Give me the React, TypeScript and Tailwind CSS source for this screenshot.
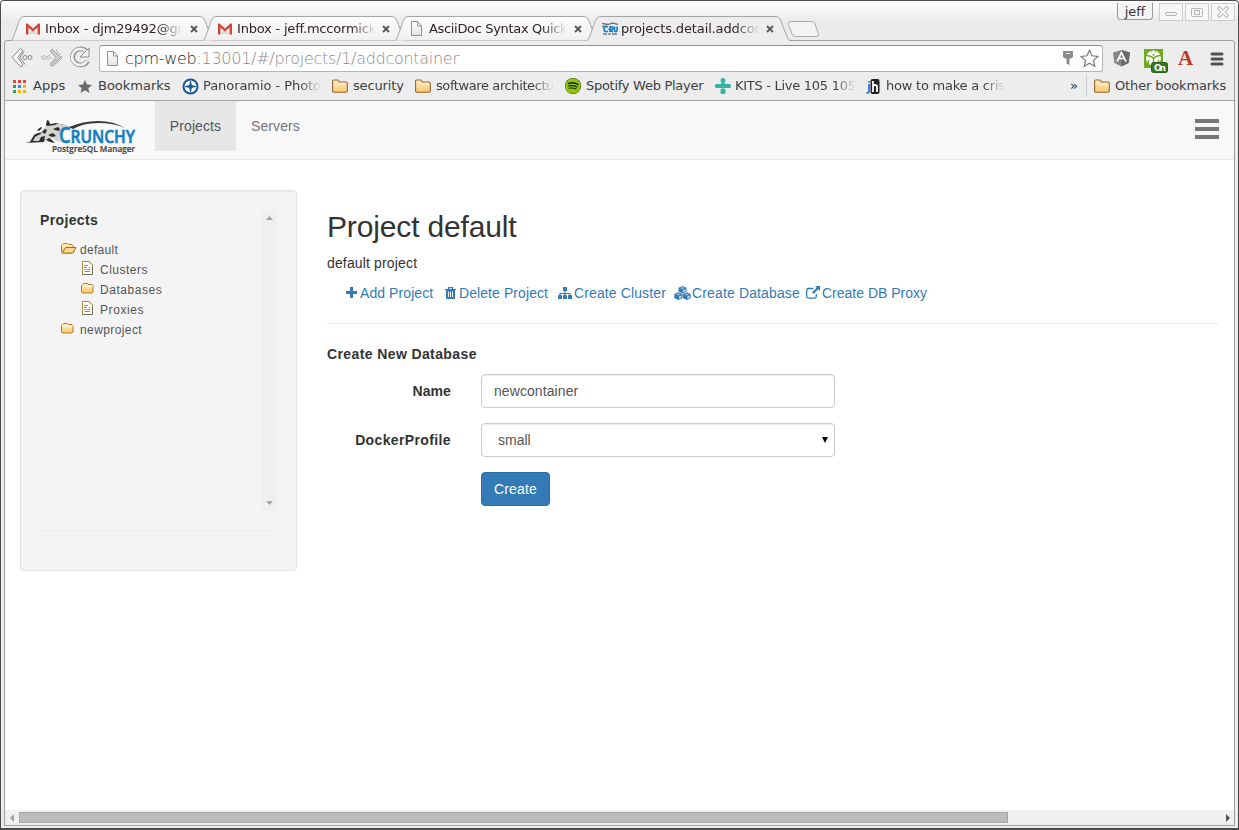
import type { ReactNode } from "react";
import { FaSpotify } from "react-icons/fa";

const ui = "font-['DejaVu_Sans',sans-serif] text-[13px] leading-[16px] whitespace-nowrap";

function GmailIcon() {
  return (
    <svg width="14" height="12" viewBox="0 0 14 12" className="block">
      <path d="M1 1h12v10H1z" fill="#eee" />
      <path d="M2.5 11 7 6l4.5 5z" fill="#d8d8d8" />
      <path d="M0 1.3Q0 .3 1.2.3L7 5.4 12.8.3Q14 .3 14 1.3V11.5H11.6V4.4L7 8.4 2.4 4.4v7.1H0z" fill="#d14336" />
    </svg>
  );
}

function PageIcon() {
  return (
    <svg width="13" height="15" viewBox="0 0 13 15" className="block">
      <defs>
        <linearGradient id="pg" x2="0" y2="1">
          <stop stopColor="#fff" />
          <stop offset="1" stopColor="#e4e4e4" />
        </linearGradient>
      </defs>
      <path d="M1.5 .5h6L11.5 5v9.500H1.500zM7.500.500V5h4" fill="url(#pg)" stroke="#909090" />
    </svg>
  );
}

function CrunchyIcon() {
  return (
    <svg width="17" height="14" viewBox="0 0 17 14" className="block">
      <path d="M0 1.500 6 2.500l5-1.500 5 1.500M0 4.500h5" stroke="#777" strokeWidth="1.400" fill="none" />
      <path d="M6 4.800Q2 3.500 2 7t4 2.200M8 10V4.800h1.500q1.500 0 1.500 1.400T9.500 7.600H8l2.800 2.400M12.500 4.500v3.700q0 1.500 1.300 1.500t1.300-1.500V4.500" stroke="#1483c9" strokeWidth="1.700" fill="none" />
      <path d="M1 12h4m1 0h3m1 0h5" stroke="#777" strokeWidth="1.500" />
    </svg>
  );
}

function Folder() {
  return (
    <svg width="16" height="14" viewBox="0 0 16 14" className="block">
      <defs>
        <linearGradient id="fo" x2="0" y2="1">
          <stop stopColor="#fff0c4" />
          <stop offset="1" stopColor="#fbc870" />
        </linearGradient>
      </defs>
      <path d="M.6 12V2.2Q.6 1 1.8 1H6L7.3 3H14Q15.3 3 15.3 4.2V12Q15.3 13.2 14 13.2H1.8Q.6 13.2.6 12z" fill="url(#fo)" stroke="#946333" strokeWidth="1.1" />
      <path d="M6 5h8" stroke="#fff3cf" />
    </svg>
  );
}

function Tab({ icon, text, tracking, active }: { icon: ReactNode; text: string; tracking: string; active?: boolean }) {
  return (
    <div className={`relative -mb-px -mr-[11px] h-[25px] w-[203px] shrink-0 ${active ? "z-10" : ""}`}>
      <svg className="absolute inset-0" width="203" height="25" viewBox="0 0 203 25">
        <defs>
          <linearGradient id="tb" x2="0" y2="1">
            <stop stopColor="#fdfdfd" />
            <stop offset="1" stopColor="#f0f0f0" />
          </linearGradient>
        </defs>
        <path d="M0 24.5 Q1.500 24 2.500 21L8.500 4.500Q9.800.500 13 .500H189Q192 .500 193.500 4L200.500 22Q201.300 24 203 24.500" fill={active ? "#ededed" : "url(#tb)"} stroke="#a5a5a5" />
        {active && <path d="M1 24.5H202" stroke="#ededed" strokeWidth="1.500" />}
      </svg>
      <div className="relative flex h-full items-center pl-[15px]">
        <span className="flex w-[19px]">{icon}</span>
        <span className={`${ui} ${tracking} text-[#2e2424] [mask-image:linear-gradient(to_right,black_82%,transparent)]`}>{text}</span>
        <svg className="absolute left-[179px] top-[9px]" width="8" height="8" viewBox="0 0 8 8">
          <path d="m1 1 6 6m0-6L1 7" stroke="#5b5b5b" strokeWidth="2" />
        </svg>
      </div>
    </div>
  );
}

function Mark({ icon, text, box, clip = "", gap = "w-[21px]" }: { icon: ReactNode; text: string; box: string; clip?: string; gap?: string }) {
  return (
    <div className={`flex shrink-0 items-center ${box}`}>
      <span className={`flex shrink-0 ${gap}`}>{icon}</span>
      <span className={`${ui} text-[#3b3f41] ${clip}`}>{text}</span>
    </div>
  );
}

const fade = "[mask-image:linear-gradient(to_right,black_82%,transparent)]";

function BrowserTop() {
  return (
    <div className="flex h-[39px] shrink-0 rounded-t-[3px] bg-gradient-to-b from-white to-[#ebebeb] to-50% pl-[10px]">
      <div className="flex w-[768px] items-end">
        <Tab icon={<GmailIcon />} text="Inbox - djm29492@gr" tracking="tracking-[-0.170px]" />
        <Tab icon={<GmailIcon />} text="Inbox - jeff.mccormick" tracking="tracking-[-0.200px]" />
        <Tab icon={<PageIcon />} text="AsciiDoc Syntax Quick" tracking="tracking-[-0.330px]" />
        <Tab icon={<CrunchyIcon />} text="projects.detail.addcor" tracking="tracking-[-0.130px]" active />
      </div>
      <svg className="ml-[8px] mt-[19px]" width="34" height="19" viewBox="0 0 34 19">
        <path d="M4 1.500H24Q27 1.500 28 4L31.500 14Q32 16.500 29 16.500H9Q6 16.500 5 14L1.500 4.500Q.500 1.500 4 1.500z" fill="#f4f4f4" stroke="#ababab" />
      </svg>
      <div className="ml-auto flex items-start pr-[3px] pt-[2px]">
        <div className={`${ui} mr-[6px] flex h-[17px] w-[36px] items-center justify-center rounded-b-[4px] border border-t-0 border-[#999] bg-[#f4f4f4] pt-px text-[#333]`}>jeff</div>
        <svg width="76" height="18" viewBox="0 0 76 18" className="block">
          <g fill="#f7f7f7" stroke="#cbcbcb">
            <rect x=".500" y=".500" width="23" height="17" />
            <rect x="26.500" y=".500" width="23" height="17" />
            <rect x="52.500" y=".500" width="23" height="17" />
            <rect x="6.500" y="9.500" width="11" height="3" rx="1.500" stroke="#b5b5b5" />
            <rect x="32.500" y="5.500" width="11" height="8" rx="1" stroke="#b5b5b5" />
            <rect x="35.500" y="7.500" width="5" height="4" stroke="#b5b5b5" />
          </g>
          <path d="m60.500 5.500 7 7m0-7-7 7" stroke="#b0b0b0" strokeWidth="3.800" strokeLinecap="square" />
          <path d="m60.500 5.500 7 7m0-7-7 7" stroke="#fff" strokeWidth="2" strokeLinecap="square" />
        </svg>
      </div>
    </div>
  );
}

function Toolbar() {
  return (
    <div className="flex h-[31px] shrink-0 items-center pl-[6px] pt-[3px]">
      <svg width="82" height="24" viewBox="0 0 82 24" className="block">
        <g fill="none" stroke="#898989" strokeWidth="1">
          <path d="M9.500 2.500 1 11.500l9 9.500 2-2-5-7.500 5-7z" fill="#f8f8f8" />
          <path d="m13 5.500-4 6 5 7" />
          <circle cx="14" cy="11.500" r="2" />
          <circle cx="19" cy="11.500" r="2" />
          <g stroke="#888">
            <circle cx="32.500" cy="11.500" r="1.800" strokeDasharray="1.500 1" />
            <circle cx="37.500" cy="11.500" r="1.800" strokeDasharray="1.500 1" />
            <path d="m41 3 8.500 8.500L41 20.500l-2-2 6-7-6-6.500z" fill="#ccc" strokeDasharray="2 .800" />
            <path d="m45 4 6 7.500-7 8" strokeDasharray="1.500 1" />
          </g>
        </g>
        <path d="M75.500 5.500A8 8 0 1 0 76.500 15" fill="none" stroke="#8d8d8d" strokeWidth="4.800" />
        <path d="M75 5.500A8 8 0 1 0 76 15" fill="none" stroke="#f0f0f0" strokeWidth="2.800" />
        <path d="M78 2v9h-9z" fill="#f3f3f3" stroke="#8d8d8d" />
        <path d="M75.500 5.500 77 9.500h-4z" fill="#f0f0f0" />
      </svg>
      <div className="ml-[6px] flex h-[27px] w-[1004px] items-center rounded-[3px] border border-[#b5b5b5] border-t-[#8f8f8f] bg-white pl-[6px] pr-[3px]">
        <PageIcon />
        <span className="ml-[6px] mt-[2px] whitespace-nowrap font-['DejaVu_Sans',sans-serif] text-[16px] font-extralight leading-[20px] tracking-[-0.280px] text-[#8a8a8a]"><span className="text-[#222]">cpm-web</span>:13001/#/projects/1/addcontainer</span>
        <svg className="ml-auto" width="12" height="16" viewBox="0 0 12 16">
          <path d="M1 1h10v6L9 8.500H7.500V15l-3-1.500v-5H3L1 7z" fill="#8b8b8b" />
          <path d="M4 3.500h4" stroke="#fff" />
        </svg>
        <svg className="ml-[6px]" width="19" height="19" viewBox="0 0 19 19">
          <path d="m9.500 1.300 2.500 5.500 6 .600-4.500 4 1.300 6-5.300-3.100-5.300 3.100 1.300-6-4.500-4 6-.600z" fill="#fff" stroke="#777" strokeWidth="1.200" />
        </svg>
      </div>
      <svg className="ml-[10px]" width="17" height="18" viewBox="0 0 17 20" preserveAspectRatio="none">
        <path d="M8.500 1 17 4l-1.400 11.500-7.100 4-7.100-4L0 4z" fill="#858585" />
        <path d="M8.500 1v18.500l7.100-4L17 4z" fill="#6a6a6a" />
        <path d="m4 14 4.500-10L13 14m-7-3.500h5" stroke="#fff" strokeWidth="1.700" fill="none" />
      </svg>
      <svg className="ml-[14px] mt-[6px]" width="25" height="25" viewBox="0 0 25 25">
        <path d="M0 0h19v19H0z" fill="#6faa21" />
        <circle cx="9.500" cy="9" r="7.500" fill="#fff" />
        <path d="M2 6.500q5 0 7.500 3 2.500-3 7.500-3M9.500 9v8M4.500 16V11m10 5v-5" stroke="#6faa21" strokeWidth="1.400" fill="none" />
        <path d="M7.500 1.500 9.500 7l2-5.500" stroke="#6faa21" strokeWidth="1" fill="none" />
        <circle cx="9.500" cy="3.500" r="1.700" fill="#fff" />
        <rect x="7.500" y="13.500" width="16" height="10" rx="2" fill="#397621" stroke="#2d5e1d" />
        <text x="10" y="22" fontFamily="DejaVu Sans" fontWeight="bold" fontSize="9" fill="#fff" textLength="12">On</text>
      </svg>
      <span className="ml-[9px] font-['Liberation_Serif',serif] text-[21px] font-bold leading-[20px] text-[#c13724]">A</span>
      <svg className="ml-[17px] mt-px" width="14" height="14" viewBox="0 0 14 14">
        <path d="M2 2h10M2 7h10M2 12h10" stroke="#505050" strokeWidth="3" strokeLinecap="round" />
      </svg>
    </div>
  );
}

function Bookmarks() {
  const dots = ["#ee4035", "#ee4035", "#ee4035", "#2fa44f", "#2a8cf0", "#f7b500", "#2fa44f", "#f7b500", "#f7b500"];
  return (
    <div className="flex h-[29px] shrink-0 items-center border-b border-[#a2a2a2] pl-[7px]">
      <Mark box="w-[66px]" text="Apps" icon={<span className="ml-px grid grid-cols-3 gap-[2px]">{dots.map((c, i) => <i key={i} className="size-[3px]" style={{ background: c }} />)}</span>} />
      <Mark box="w-[104px]" text="Bookmarks" gap="w-[20px]" icon={<svg width="14" height="13" viewBox="0 0 14 13"><path d="m7 0 2 4.500 5 .500-3.700 3.200L11.500 13 7 10.300 2.500 13l1.200-4.800L0 5l5-.500z" fill="#6a6a6a" /></svg>} />
      <Mark box="w-[150px]" text="Panoramio - Photo" clip={`tracking-[-0.060px] ${fade}`} icon={<svg width="17" height="17" viewBox="0 0 17 17"><circle cx="8.500" cy="8.500" r="7" fill="#fff" stroke="#14579b" strokeWidth="2" /><path d="m8.500 3 1 4.500 4.500 1-4.500 1-1 4.500-1-4.500-4.500-1 4.500-1z" fill="#14579b" stroke="#14579b" strokeWidth=".800" /></svg>} />
      <Mark box="w-[83px]" text="security" clip="tracking-[-0.150px]" icon={<Folder />} />
      <Mark box="w-[150px]" text="software architectu" clip={`tracking-[-0.400px] ${fade}`} icon={<Folder />} />
      <Mark box="w-[150px]" text="Spotify Web Player" clip="tracking-[-0.280px]" icon={<span className="rounded-full bg-[#18270b]"><FaSpotify size={16} color="#8fc40c" /></span>} />
      <Mark box="w-[151px]" text="KITS - Live 105 105" clip={`tracking-[-0.280px] ${fade}`} gap="w-[20px]" icon={<svg width="16" height="16" viewBox="0 0 16 16"><g fill="#38b3a8"><circle cx="8" cy="2.500" r="2.500" /><rect x="0" y="6" width="7.500" height="4" rx="1.500" /><rect x="8.500" y="6" width="7.500" height="4" rx="1.500" /><rect x="6" y="5" width="4" height="5" /><rect x="5.500" y="10.500" width="5" height="5.500" rx="1.500" /></g></svg>} />
      <Mark box="w-[204px]" text="how to make a cris" clip={`tracking-[-0.230px] ${fade}`} gap="w-[20px]" icon={<svg width="14" height="15" viewBox="0 0 14 15"><rect x="4.500" width="9" height="15" rx="2" fill="#222" /><path d="M3 2v1.500M3 5v7q0 2-2.500 2" stroke="#2f75d6" strokeWidth="1.800" fill="none" /><path d="M7 2v11M7 8q0-2 2-2t2 2v5" stroke="#fff" strokeWidth="1.800" fill="none" /></svg>} />
      <span className={`${ui} w-[16px] text-[#333]`}>»</span>
      <span className="mr-[7px] h-[22px] w-px bg-[#c4cfd8]" />
      <Mark box="" text="Other bookmarks" clip="tracking-[-0.130px]" icon={<Folder />} />
    </div>
  );
}

function Logo() {
  return (
    <svg width="114" height="36" viewBox="0 0 114 36" className="block overflow-visible">
      <path d="M30 4q8 1 14 4 14-6 29-6 16 0 27 7-11-5-27-5-15 0-25 6Q36 5 30 5z" fill="#3a3836" />
      <path d="M4 23q3-3 5-7 4-3 8-4l5-6q1-5 2-4l1 3q9-1 14 1l6 3q-9 3-11 9l2 5q-6-1-8-4l-7 3-7 1-5 0z" fill="#d2d2d2" />
      <path d="M0 24l5-1 4-7q5-3 8-2l-7 4-2 4 6 0 2-4 4-1-1 6zM21 6l1-5 2 1 1 3 8-1-3 2-8 1zM17 13l3-3 2 1-2 4zM28 10l5-2 2 2-1 2-4-1zM23 16l5-2 3 3-4 1zM21 21l3-2 3 2 3 3-5-1zM12 11l4-3 1 1-3 3z" fill="#2e2c2b" />
      <text x="34" y="24" fontFamily="Open Sans" fontWeight="600" fontSize="21" fill="#117fc2" stroke="#117fc2" strokeWidth=".600" textLength="76" lengthAdjust="spacingAndGlyphs">C<tspan fontSize="18">RUNCHY</tspan></text>
      <text x="27" y="33" fontFamily="Open Sans" fontWeight="600" fontSize="9" fill="#454545" stroke="#454545" strokeWidth=".200" textLength="83" lengthAdjust="spacingAndGlyphs">PostgreSQL Manager</text>
    </svg>
  );
}

function TreeFolder({ open }: { open?: boolean }) {
  return (
    <svg width="16" height="12" viewBox="0 0 16 12" className="block">
      <defs>
        <linearGradient id="tf" x2="0" y2="1">
          <stop stopColor="#fff2cd" />
          <stop offset="1" stopColor="#ffc66b" />
        </linearGradient>
      </defs>
      <path d="M.500 10V3.500l1-1 1-1h4l1 1H11l1 1V10l-1 1H1.500z" fill="url(#tf)" stroke="#b77a24" />
      {open ? <path d="m1.500 10.500 3-5H15L12 11H1.500z" fill="#ffd78c" stroke="#a76c1b" /> : <path d="M1.500 4.500h10" stroke="#fff6d9" />}
    </svg>
  );
}

function TreeDoc() {
  return (
    <svg width="12" height="14" viewBox="0 0 12 14" className="block">
      <path d="M1.500 .500h7l3 3v10h-10z" fill="#fffef8" stroke="#aa8e45" />
      <path d="M11.500 5v8.500H1" fill="none" stroke="#777363" />
      <path d="M8.500.500v3h3z" fill="#d8bc6e" />
      <path d="M3 4.500h4M3 8.500h2" stroke="#f26572" />
      <path d="M3 6.500h3m2 0h1M6 8.500h3" stroke="#888" />
      <path d="M4 10.500h5" stroke="#4aa181" />
    </svg>
  );
}

function TreeRow({ indent, icon, text, tracking }: { indent: string; icon: ReactNode; text: string; tracking: string }) {
  return (
    <div className={`flex h-[20px] items-center ${indent}`}>
      <span className="mb-[4px] w-[19px]">{icon}</span>
      <span className={`text-[12px] leading-[20px] text-[#555] ${tracking}`}>{text}</span>
    </div>
  );
}

function Sidebar() {
  return (
    <aside className="h-[381px] w-[277px] shrink-0 rounded-[4px] border border-[#e3e3e3] bg-[#f4f4f4] px-[19px] pt-[19px] shadow-[inset_0_1px_1px_rgba(0,0,0,0.050)]">
      <div className="flex h-[300px]">
        <div className="flex-1">
          <h4 className="mb-[10px] text-[14px] font-bold leading-[20px] tracking-[0.350px] text-[#333]">Projects</h4>
          <TreeRow indent="pl-[21px]" icon={<TreeFolder open />} text="default" tracking="tracking-[0.300px]" />
          <TreeRow indent="pl-[41px]" icon={<TreeDoc />} text="Clusters" tracking="tracking-[0.500px]" />
          <TreeRow indent="pl-[41px]" icon={<TreeFolder />} text="Databases" tracking="tracking-[0.550px]" />
          <TreeRow indent="pl-[41px]" icon={<TreeDoc />} text="Proxies" tracking="tracking-[0.600px]" />
          <TreeRow indent="pl-[21px]" icon={<TreeFolder />} text="newproject" tracking="tracking-[0.400px]" />
        </div>
        <div className="flex w-[15px] flex-col items-center justify-between bg-[#f0f0f0] pb-[5px] pt-[6px]">
          <svg width="7" height="4" viewBox="0 0 8 4" preserveAspectRatio="none"><path d="m0 4 4-4 4 4z" fill="#a3a3a3" /></svg>
          <svg width="7" height="4" viewBox="0 0 8 4" preserveAspectRatio="none"><path d="m0 0 4 4 4-4z" fill="#a3a3a3" /></svg>
        </div>
      </div>
      <hr className="mt-[20px] border-[#ececec]" />
    </aside>
  );
}

function PlusIcon() {
  return (
    <svg width="11" height="11" viewBox="0 0 11 11" className="block">
      <path d="M5.500 0v11M0 5.500h11" stroke="#337ab7" strokeWidth="3" />
    </svg>
  );
}

function TrashIcon() {
  return (
    <svg width="11" height="12" viewBox="0 0 11 12" className="block">
      <path d="M0 2.500h11M3.500 2V.600h4V2" stroke="#337ab7" strokeWidth="1.200" fill="none" />
      <path d="M1 3h9v8q0 1-1 1H2q-1 0-1-1z" fill="#337ab7" />
      <path d="M3.500 4.500V10M5.500 4.500V10M7.500 4.500V10" stroke="#fff" strokeWidth=".900" />
    </svg>
  );
}

function SitemapIcon() {
  return (
    <svg width="14" height="12" viewBox="0 0 14 12" className="block">
      <path d="M2 9V6.500h10V9M7 3v6" stroke="#337ab7" strokeWidth="1.100" fill="none" />
      <g fill="#337ab7">
        <rect x="5" width="4" height="4" rx=".600" />
        <rect y="8" width="4" height="4" rx=".600" />
        <rect x="5" y="8" width="4" height="4" rx=".600" />
        <rect x="10" y="8" width="4" height="4" rx=".600" />
      </g>
    </svg>
  );
}

function CubesIcon() {
  const cube = "M4.300 0 8.300 1.700V5.600L4.300 7.600.300 5.600V1.700z";
  const top = "M1.800 2.100 4.300 1.100 6.800 2.100 4.300 3.200z";
  const side = "M5 4.300V6.300L7.300 5.200V3.300z";
  return (
    <svg width="17" height="14" viewBox="0 0 17 14" className="block">
      {["translate(4.200 0)", "translate(0 6.300)", "translate(8.400 6.300)"].map((t) => (
        <g key={t} transform={t}>
          <path d={cube} fill="#337ab7" />
          <path d={top} fill="#fff" fillOpacity=".500" />
          <path d={side} fill="#fff" fillOpacity=".800" />
        </g>
      ))}
    </svg>
  );
}

function LinkOutIcon() {
  return (
    <svg width="14" height="13" viewBox="0 0 14 13" className="block">
      <path d="M7.500 2.500H2.500q-1.800 0-1.800 1.800v6q0 1.800 1.800 1.800h6q1.800 0 1.800-1.800V8" fill="none" stroke="#337ab7" strokeWidth="1.300" />
      <path d="M9 0h5v5l-1.700-1.700L7.500 8 6 6.500l4.700-4.700z" fill="#337ab7" />
    </svg>
  );
}

function Action({ icon, text, box, gap, tracking }: { icon: ReactNode; text: string; box: string; gap: string; tracking: string }) {
  return (
    <a className={`flex shrink-0 items-center whitespace-nowrap text-[#337ab7] ${box}`}>
      <span className={`mb-px flex shrink-0 ${gap}`}>{icon}</span>
      <span className={tracking}>{text}</span>
    </a>
  );
}

function Content() {
  const field = "flex h-[34px] w-[354px] items-center rounded-[4px] border border-[#ccc] bg-white text-[#555] shadow-[inset_0_1px_1px_rgba(0,0,0,0.075)]";
  const label = "w-[124px] mr-[30px] text-right font-bold";
  return (
    <main className="ml-[30px] w-[892px] text-[14px] leading-[20px] text-[#333]">
      <h2 className="mt-[20px] text-[30px] leading-[33px] tracking-[-0.150px]">Project default</h2>
      <p className="mt-[10px] tracking-[0.150px]">default project</p>
      <div className="mt-[10px] flex pl-[19px]">
        <Action box="w-[99px]" gap="w-[14px]" icon={<PlusIcon />} text="Add Project" tracking="tracking-[0.080px]" />
        <Action box="w-[113px]" gap="w-[14px]" icon={<TrashIcon />} text="Delete Project" tracking="tracking-[0.080px]" />
        <Action box="w-[116px]" gap="w-[16px]" icon={<SitemapIcon />} text="Create Cluster" tracking="tracking-[0.120px]" />
        <Action box="w-[132px]" gap="w-[18px]" icon={<CubesIcon />} text="Create Database" tracking="tracking-[0.140px]" />
        <Action box="" gap="w-[16px]" icon={<LinkOutIcon />} text="Create DB Proxy" tracking="tracking-[0]" />
      </div>
      <hr className="mt-[20px] border-[#eee]" />
      <h4 className="mt-[20px] font-bold tracking-[0.390px]">Create New Database</h4>
      <div className="mt-[10px] flex items-center">
        <label className={`${label} tracking-[0.100px]`}>Name</label>
        <div className={`${field} pl-[12px] tracking-[0.080px]`}>newcontainer</div>
      </div>
      <div className="mt-[15px] flex items-center">
        <label className={`${label} tracking-[0.370px]`}>DockerProfile</label>
        <div className={`${field} justify-between pl-[16px] pr-[6px]`}>
          <span>small</span>
          <svg width="6" height="6" viewBox="0 0 7 7"><path d="M0 0h7L3.500 7z" fill="#000" /></svg>
        </div>
      </div>
      <button className="ml-[154px] mt-[15px] flex h-[34px] w-[69px] items-center justify-center rounded-[4px] border border-[#2e6da4] bg-[#337ab7] tracking-[0.150px] text-white">Create</button>
    </main>
  );
}

export default function App() {
  return (
    <div className="flex h-[830px] w-[1239px] flex-col overflow-hidden rounded-t-[4px] border border-b-2 border-[#4d4a4b] bg-[#ebebeb]">
      <BrowserTop />
      <div className="mx-[3px] flex h-[786px] shrink-0 flex-col overflow-hidden rounded-t-[3px] border border-[#a0a0a0] bg-[#ededed]">
        <Toolbar />
        <Bookmarks />
        <div className="flex min-h-0 flex-1 flex-col bg-white font-['Liberation_Sans',Arial,sans-serif]">
          <nav className="flex h-[59px] shrink-0 border-b border-[#e7e7e7] bg-[#f8f8f8] pl-[20px] text-[14px] leading-[20px]">
            <div className="w-[130px] pt-[18px]"><Logo /></div>
            <a className="flex h-[50px] w-[81px] items-center justify-center bg-[#e7e7e7] tracking-[0.100px] text-[#555]">Projects</a>
            <a className="flex h-[50px] items-center px-[15px] tracking-[0.100px] text-[#777]">Servers</a>
            <div className="ml-auto mr-[15px] mt-[18px] flex w-[24px] flex-col gap-[4px]">
              <i className="h-[4px] bg-[#777]" /><i className="h-[4px] bg-[#777]" /><i className="h-[4px] bg-[#777]" />
            </div>
          </nav>
          <div className="flex flex-1 pl-[15px] pt-[30px]">
            <Sidebar />
            <Content />
          </div>
          <div className="flex h-[15px] shrink-0 items-center bg-[#f0f0f0] pl-[5px] pr-[4px]">
            <svg width="4" height="8" viewBox="0 0 4 8"><path d="M4 0v8L0 4z" fill="#a3a3a3" /></svg>
            <div className="ml-[5px] h-[11px] w-[989px] border border-[#a5a5a5] bg-[#bbb]" />
            <svg className="ml-auto" width="4" height="8" viewBox="0 0 4 8"><path d="M0 0v8l4-4z" fill="#505050" /></svg>
          </div>
        </div>
      </div>
    </div>
  );
}
